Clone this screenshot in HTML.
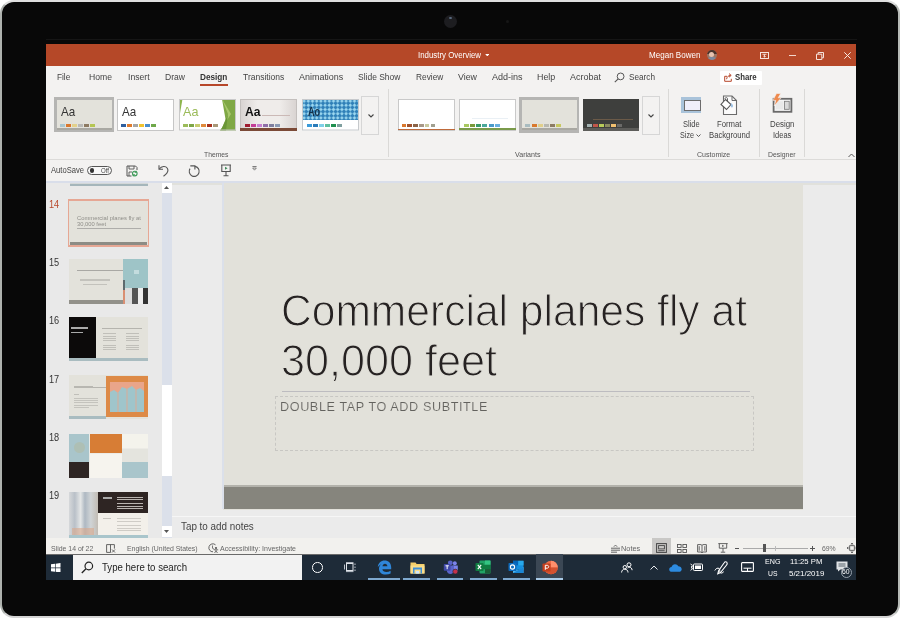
<!DOCTYPE html>
<html><head><meta charset="utf-8"><title>PowerPoint on tablet</title>
<style>
html,body{margin:0;padding:0;background:#fff;}
body{width:900px;height:618px;position:relative;overflow:hidden;font-family:"Liberation Sans",sans-serif;}
.t,#device div,#device svg{position:absolute;}
.t{white-space:nowrap;transform-origin:0 50%;display:block;}
#device{position:absolute;left:0;top:0;width:900px;height:618px;box-sizing:border-box;background:#080808;border:2px solid;border-color:#dedede #b6bab6 #d4d4d4 #aeb2ae;border-radius:14px;}
#o{left:-2px;top:-2px;width:900px;height:618px;}
#screen{left:45.5px;top:44px;width:810.7px;height:536px;background:#e8e8e8;overflow:hidden;}
</style></head><body>
<div id="device"><div id="o">
  <div style="left:444px;top:15px;width:13px;height:13px;border-radius:50%;background:#1d1d20;"></div>
  <div style="left:449px;top:17px;width:3px;height:2px;border-radius:50%;background:#5d6f85;"></div>
  <div style="left:505.500px;top:19.500px;width:3.500px;height:3.500px;border-radius:50%;background:#171717;"></div>
  <div style="left:45.500px;top:38.500px;width:811px;height:1px;background:#151515;"></div>
  <div id="screen">
    <div id="g" style="left:-45.5px;top:-44px;width:900px;height:618px;">
<!-- title bar -->
<div style="left:45.5px;top:44px;width:810.7px;height:22px;background:#b54828;"></div>
<!-- title dropdown arrow -->
<svg style="left:484.500px;top:53.500px" width="4.600" height="2.800" viewBox="0 0 6 4"><path d="M0 0h6L3 3.5z" fill="#fff"/></svg>
<!-- avatar -->
<div style="left:706.5px;top:49.5px;width:10px;height:10px;border-radius:50%;background:#9a7565;overflow:hidden;">
  <div style="left:0;top:0;width:10px;height:4.500px;background:#4a332b;"></div>
  <div style="left:2.5px;top:2.5px;width:5px;height:5px;border-radius:50%;background:#e6c3b0;"></div>
  <div style="left:1px;top:7.5px;width:8px;height:4px;border-radius:3px 3px 0 0;background:#7b8aa0;"></div>
</div>
<!-- window controls -->
<svg style="left:759.700px;top:51.900px" width="9" height="7" viewBox="0 0 9 7"><rect x=".5" y=".5" width="8" height="6" fill="none" stroke="#f6e3dc" stroke-width="1"/><path d="M2.500 2.300h4M4.500 2.300v2.800M3.300 4l1.200 1.200L5.700 4" stroke="#f6e3dc" stroke-width=".9" fill="none"/></svg>
<div style="left:788.800px;top:55.200px;width:7px;height:1.100px;background:#f3d6cc;"></div>
<svg style="left:816px;top:51.800px" width="8" height="8" viewBox="0 0 8 8"><path d="M.5 2.200h5.300v5.300H.5z M2.200 2V.5h5.300v5.300H6" fill="none" stroke="#f6e3dc" stroke-width="1"/></svg>
<svg style="left:844px;top:51.900px" width="7" height="7" viewBox="0 0 7 7"><path d="M.3.300l6.400 6.400M6.700.3L.3 6.700" stroke="#f8e8e2" stroke-width="1"/></svg>

<!-- tab row + ribbon -->
<div style="left:45.5px;top:66px;width:810.7px;height:93px;background:#f3f2f1;"></div>
<div style="left:200px;top:83.5px;width:28px;height:2px;background:#b7472a;"></div>
<!-- search icon -->
<svg style="left:614px;top:71.5px" width="11" height="11" viewBox="0 0 11 11"><circle cx="6.6" cy="4.4" r="3.4" fill="none" stroke="#555" stroke-width="1"/><path d="M4.2 6.8L.8 10.2" stroke="#555" stroke-width="1.1"/></svg>
<!-- share -->
<div style="left:720px;top:70.5px;width:42px;height:14px;background:#fff;border-radius:1px;"></div>
<svg style="left:723.5px;top:72.5px" width="9" height="9" viewBox="0 0 9 9"><path d="M3 3.3H.7v5h6.6V5.8" fill="none" stroke="#b7472a" stroke-width="1"/><path d="M2.6 6.2c.2-2.2 1.600-3.600 4-3.800M5 .6l2.200 1.800L5 4.200" fill="none" stroke="#b7472a" stroke-width="1"/></svg>
<div style="left:54px;top:97px;width:60px;height:35px;background:#b5b5b3;"></div>
<div style="left:56.5px;top:99.5px;width:55px;height:30px;background:#e3e2db;"></div>
<div style="left:56.5px;top:128px;width:55px;height:1.5px;background:#a9a8a2;"></div>
<div style="left:60px;top:123.8px;width:5px;height:3px;background:#a9c6cf;"></div>
<div style="left:66px;top:123.8px;width:5px;height:3px;background:#d9782d;"></div>
<div style="left:72px;top:123.8px;width:5px;height:3px;background:#e2d18c;"></div>
<div style="left:78px;top:123.8px;width:5px;height:3px;background:#b9b9b7;"></div>
<div style="left:84px;top:123.8px;width:5px;height:3px;background:#8d7a62;"></div>
<div style="left:90px;top:123.8px;width:5px;height:3px;background:#b5c653;"></div>
<div style="left:117px;top:99px;width:57px;height:31.5px;background:#fff;box-sizing:border-box;border:1px solid #c6c6c6;"></div>
<div style="left:121px;top:123.8px;width:5px;height:3px;background:#2f5f9e;"></div>
<div style="left:127px;top:123.8px;width:5px;height:3px;background:#e07b2c;"></div>
<div style="left:133px;top:123.8px;width:5px;height:3px;background:#a5a5a5;"></div>
<div style="left:139px;top:123.8px;width:5px;height:3px;background:#f0c330;"></div>
<div style="left:145px;top:123.8px;width:5px;height:3px;background:#4a8fcf;"></div>
<div style="left:151px;top:123.8px;width:5px;height:3px;background:#6fa84a;"></div>
<svg style="left:178.500px;top:99px" width="57" height="31.500" viewBox="0 0 57 31.500"><rect width="57" height="31.500" fill="#fff"/><path d="M43 0h14v31.500H41l6-8.500z" fill="#7fa845"/><path d="M43 0l6 15-6 14 9-14z" fill="#a8c76c"/><path d="M49 15l-6 14 -2 2.500 h6z" fill="#6b9638"/><path d="M0 0h3.500L0 20z" fill="#8db54d"/><rect x=".5" y=".5" width="56" height="30.500" fill="none" stroke="#c9c9c9"/></svg>
<div style="left:183px;top:123.8px;width:5px;height:3px;background:#9bbb59;"></div>
<div style="left:189px;top:123.8px;width:5px;height:3px;background:#7ea647;"></div>
<div style="left:195px;top:123.8px;width:5px;height:3px;background:#c7cc6f;"></div>
<div style="left:201px;top:123.8px;width:5px;height:3px;background:#e08a3c;"></div>
<div style="left:207px;top:123.8px;width:5px;height:3px;background:#a8321d;"></div>
<div style="left:213px;top:123.8px;width:5px;height:3px;background:#a89878;"></div>
<div style="left:240.3px;top:99px;width:56.5px;height:31.5px;background:linear-gradient(90deg,#d9d4d2,#efecea 30%,#efecea 70%,#d9d4d2);box-sizing:border-box;border:1px solid #c3bfbd;"></div>
<div style="left:240.3px;top:128px;width:56.5px;height:2.5px;background:#7b4a37;"></div>
<div style="left:262px;top:114.8px;width:28px;height:0.8px;background:#cbb9b6;"></div>
<div style="left:244.5px;top:123.6px;width:5px;height:3px;background:#a01c30;"></div>
<div style="left:250.5px;top:123.6px;width:5px;height:3px;background:#c43e96;"></div>
<div style="left:256.5px;top:123.6px;width:5px;height:3px;background:#c77fd0;"></div>
<div style="left:262.5px;top:123.6px;width:5px;height:3px;background:#8f6fa8;"></div>
<div style="left:268.5px;top:123.6px;width:5px;height:3px;background:#7f7f9f;"></div>
<div style="left:274.5px;top:123.6px;width:5px;height:3px;background:#8c9bb5;"></div>
<svg style="left:302px;top:99px" width="57" height="31.500" viewBox="0 0 57 31.500"><defs><pattern id="pt" width="4.200" height="4.200" patternUnits="userSpaceOnUse"><rect width="4.200" height="4.200" fill="#2f80b8"/><path d="M2.100 .2L4 2.100 2.100 4 .2 2.100z" fill="#9bd7ef"/></pattern></defs><rect width="57" height="31.500" fill="#fff"/><rect width="57" height="21" fill="url(#pt)"/><rect x=".5" y=".5" width="56" height="30.500" fill="none" stroke="#c6c9cc"/></svg>
<div style="left:306.5px;top:124px;width:5px;height:3px;background:#3a9ad9;"></div>
<div style="left:312.5px;top:124px;width:5px;height:3px;background:#2b7bb9;"></div>
<div style="left:318.5px;top:124px;width:5px;height:3px;background:#7fd0e8;"></div>
<div style="left:324.5px;top:124px;width:5px;height:3px;background:#5fbf9f;"></div>
<div style="left:330.5px;top:124px;width:5px;height:3px;background:#1f8f4f;"></div>
<div style="left:336.5px;top:124px;width:5px;height:3px;background:#7f9f9f;"></div>
<div style="left:361.3px;top:95.5px;width:18.2px;height:39px;background:#f3f2f1;box-sizing:border-box;border:1px solid #d6d6d6;"></div>
<svg style="left:367.500px;top:113.500px" width="6" height="4" viewBox="0 0 6 4"><path d="M.5.5L3 3 5.500.5" fill="none" stroke="#444" stroke-width="1.100"/></svg>
<div style="left:387.5px;top:89px;width:1px;height:68px;background:#dad9d7;"></div>
<div style="left:668.3px;top:89px;width:1px;height:68px;background:#dad9d7;"></div>
<div style="left:759px;top:89px;width:1px;height:68px;background:#dad9d7;"></div>
<div style="left:803.5px;top:89px;width:1px;height:68px;background:#dad9d7;"></div>
<div style="left:397.5px;top:99px;width:57px;height:31.5px;background:#fff;box-sizing:border-box;border:1px solid #c9c9c9;"></div>
<div style="left:397.5px;top:128.6px;width:57px;height:1.9px;background:#bf6a3a;"></div>
<div style="left:401.5px;top:124px;width:4.8px;height:3px;background:#d9782d;"></div>
<div style="left:407.3px;top:124px;width:4.8px;height:3px;background:#a0522d;"></div>
<div style="left:413.1px;top:124px;width:4.8px;height:3px;background:#8b6347;"></div>
<div style="left:418.9px;top:124px;width:4.8px;height:3px;background:#a89888;"></div>
<div style="left:424.7px;top:124px;width:4.8px;height:3px;background:#c9c9a0;"></div>
<div style="left:430.5px;top:124px;width:4.8px;height:3px;background:#a0a090;"></div>
<div style="left:459.2px;top:99px;width:56.6px;height:31.5px;background:#fff;box-sizing:border-box;border:1px solid #c9c9c9;"></div>
<div style="left:459.2px;top:128.4px;width:56.6px;height:2.1px;background:#7a9a4a;"></div>
<div style="left:463.7px;top:123.8px;width:5.2px;height:3px;background:#a8c860;"></div>
<div style="left:469.9px;top:123.8px;width:5.2px;height:3px;background:#7a9a3a;"></div>
<div style="left:476.1px;top:123.8px;width:5.2px;height:3px;background:#3a9a6a;"></div>
<div style="left:482.3px;top:123.8px;width:5.2px;height:3px;background:#4aa89a;"></div>
<div style="left:488.5px;top:123.8px;width:5.2px;height:3px;background:#4a9ac8;"></div>
<div style="left:494.7px;top:123.8px;width:5.2px;height:3px;background:#6ab0e0;"></div>
<div style="left:472px;top:118.3px;width:36px;height:0.6px;background:#eaf0f5;"></div>
<div style="left:519.2px;top:97px;width:60.3px;height:35.5px;background:#b5b5b3;"></div>
<div style="left:521.7px;top:99.5px;width:55.3px;height:30.3px;background:#e3e2db;"></div>
<div style="left:521.7px;top:128.3px;width:55.3px;height:1.5px;background:#a9a8a2;"></div>
<div style="left:525.3px;top:123.8px;width:5.2px;height:3px;background:#a9bcc0;"></div>
<div style="left:531.5px;top:123.8px;width:5.2px;height:3px;background:#d9782d;"></div>
<div style="left:537.7px;top:123.8px;width:5.2px;height:3px;background:#e0cf8b;"></div>
<div style="left:543.9px;top:123.8px;width:5.2px;height:3px;background:#b8b8b0;"></div>
<div style="left:550.1px;top:123.8px;width:5.2px;height:3px;background:#8c7b63;"></div>
<div style="left:556.3px;top:123.8px;width:5.2px;height:3px;background:#c8c860;"></div>
<div style="left:583px;top:99px;width:56px;height:31.5px;background:#3e3f3d;"></div>
<div style="left:583px;top:128px;width:56px;height:2.5px;background:#5d5d5a;"></div>
<div style="left:593px;top:118.5px;width:40px;height:0.7px;background:#6b5a48;"></div>
<div style="left:586.7px;top:123.6px;width:5px;height:3px;background:#a3b1b0;"></div>
<div style="left:592.7px;top:123.6px;width:5px;height:3px;background:#c0564a;"></div>
<div style="left:598.7px;top:123.6px;width:5px;height:3px;background:#b8cc5a;"></div>
<div style="left:604.7px;top:123.6px;width:5px;height:3px;background:#8a8a60;"></div>
<div style="left:610.7px;top:123.6px;width:5px;height:3px;background:#f0c070;"></div>
<div style="left:616.7px;top:123.6px;width:5px;height:3px;background:#6a6a68;"></div>
<div style="left:642.2px;top:95.5px;width:18.3px;height:39px;background:#f3f2f1;box-sizing:border-box;border:1px solid #d6d6d6;"></div>
<svg style="left:648.300px;top:113.500px" width="6" height="4" viewBox="0 0 6 4"><path d="M.5.5L3 3 5.500.5" fill="none" stroke="#444" stroke-width="1.100"/></svg>
<div style="left:681px;top:97.2px;width:20px;height:15.8px;background:#a9c3da;"></div>
<div style="left:684.2px;top:99.7px;width:16.6px;height:11.6px;background:#f0effa;box-sizing:border-box;border:1.300px solid #6c6c6c;"></div>
<svg style="left:696px;top:134.300px" width="5" height="3.500" viewBox="0 0 5 3.500"><path d="M.5.5L2.500 2.500 4.500.5" fill="none" stroke="#555" stroke-width="1"/></svg>
<svg style="left:720px;top:94.500px" width="19" height="21" viewBox="0 0 19 21"><path d="M3.500 1h8.500l4.500 4.500v14H3.500z" fill="#fbfbfb" stroke="#6b6b6b" stroke-width="1.100"/><path d="M12 1v4.500h4.500" fill="none" stroke="#6b6b6b" stroke-width="1"/><path d="M5.500 4.500l5.500 5-4.500 5-5.500-5z" fill="#fff" stroke="#555" stroke-width="1.100"/><path d="M5 4c0-2 2.500-2 2.500 0v2.500" fill="none" stroke="#555" stroke-width=".9"/><path d="M11 8c1.800 1.500 2.800 3 1.500 4.300-1.300.8-2.300-.8-1.500-4.300z" fill="#9ec3e6"/></svg>
<svg style="left:771px;top:93px" width="22" height="21" viewBox="0 0 22 21"><rect x="2.600" y="5.800" width="17.800" height="13" fill="#f4f4f4" stroke="#6a6a6a" stroke-width="1.800"/><rect x="13.500" y="8.300" width="4.700" height="8" fill="#d9d9d9" stroke="#7a7a7a" stroke-width=".8"/><rect x="4.800" y="8.300" width="7.500" height="8" fill="#e9e9e9"/><path d="M5.500.5h4.200L7.200 4.800h3L3.200 13l1.600-5.600H1.800z" fill="#ee8a4e" stroke="#f3f2f1" stroke-width=".6"/></svg>
<svg style="left:848px;top:153px" width="7" height="5" viewBox="0 0 7 5"><path d="M.5 4L3.500 1 6.500 4" fill="none" stroke="#555" stroke-width="1"/></svg>
<div style="left:45.5px;top:159px;width:810.7px;height:1px;background:#dcdbd9;"></div>
<!-- QAT -->
<div style="left:45.5px;top:160px;width:810.7px;height:21px;background:#f3f2f1;"></div>

<!-- autosave toggle -->
<div style="left:86.500px;top:165.500px;width:25.500px;height:9.500px;border:1px solid #555;border-radius:6px;box-sizing:border-box;background:#f8f8f8;"></div>
<div style="left:89.800px;top:168px;width:4.500px;height:4.500px;border-radius:50%;background:#333;"></div>
<!-- save icon -->
<svg style="left:126px;top:164.500px" width="12" height="12" viewBox="0 0 12 12"><path d="M1 1h8.500L11 2.500V5M5.500 11H1V1" fill="none" stroke="#555" stroke-width="1"/><path d="M3 1v3h5V1M3 11V7h3" fill="none" stroke="#555" stroke-width=".9"/><circle cx="8.800" cy="8.600" r="2.300" fill="none" stroke="#3f9b5a" stroke-width="1.100"/><path d="M10.300 5.800v1.700H8.600M7.300 11.300V9.600H9" fill="none" stroke="#3f9b5a" stroke-width=".8"/></svg>
<!-- undo -->
<svg style="left:157.500px;top:164px" width="12" height="13" viewBox="0 0 12 13"><path d="M1 1.200v4h4" fill="none" stroke="#555" stroke-width="1.100"/><path d="M1.300 5c2.300-3 6.200-3.300 8-.8 1.500 2.500.2 5.200-3.800 8" fill="none" stroke="#555" stroke-width="1.100"/></svg>
<!-- redo -->
<svg style="left:186.700px;top:163.300px" width="14" height="15" viewBox="0 0 14 15"><path d="M3.300 2.900H7.900V6.400" fill="none" stroke="#555" stroke-width="1.100"/><path d="M7.900 3.400A5 5 0 1 1 3 5.600" fill="none" stroke="#555" stroke-width="1.100"/></svg>
<!-- present -->
<svg style="left:219.500px;top:164px" width="12" height="13" viewBox="0 0 12 13"><path d="M1 1h10M1.800 1v6.500h8.400V1M6 7.500v4M3.500 11.800h5" fill="none" stroke="#555" stroke-width="1.100"/><path d="M5 2.800v3l2.600-1.500z" fill="#3f8a5a"/></svg>
<!-- more -->
<svg style="left:251.700px;top:166px" width="5" height="5" viewBox="0 0 6 6"><path d="M.5.600h5" stroke="#555" stroke-width=".9"/><path d="M.8 2.400h4.400L3 5z" fill="none" stroke="#555" stroke-width=".8"/></svg>

<!-- main area -->
<div style="left:45.5px;top:182px;width:810.7px;height:356px;background:#e9e9e9;"></div>
<div style="left:172px;top:182px;width:684px;height:356px;background:#ebebeb;"></div>
<div style="left:161.500px;top:182px;width:10.500px;height:355.500px;background:#dbe0ea;"></div>
<div style="left:161.500px;top:385px;width:10.500px;height:91px;background:#fff;"></div>
<div style="left:161.500px;top:182px;width:10.500px;height:10.500px;background:#fff;"></div>
<div style="left:161.500px;top:526px;width:10.500px;height:10.500px;background:#fff;"></div>
<svg style="left:164.300px;top:186px" width="5" height="3" viewBox="0 0 7 4"><path d="M0 4L3.500 0 7 4z" fill="#555"/></svg>
<svg style="left:164.300px;top:530px" width="5" height="3" viewBox="0 0 7 4"><path d="M0 0L3.500 4 7 0z" fill="#555"/></svg>
<div style="left:69.5px;top:182px;width:78.5px;height:3.5px;background:#d4d8d8;"></div>
<div style="left:69.5px;top:184.3px;width:78.5px;height:1.7px;background:#a5b6bb;"></div>
<div style="left:67.6px;top:199px;width:81.6px;height:48px;background:#e6a794;"></div>
<div style="left:69.2px;top:200.6px;width:78.4px;height:44.8px;background:#e3e2db;"></div>
<div style="left:69.5px;top:242px;width:77.8px;height:3.3px;background:#8d8c85;"></div>
<div style="left:77px;top:228.3px;width:64px;height:0.8px;background:#aeadaa;"></div>
<div style="left:69.3px;top:259px;width:78.2px;height:44.6px;background:#e3e2db;"></div>
<div style="left:69.3px;top:299.6px;width:53.7px;height:4px;background:#92918a;"></div>
<div style="left:123px;top:259px;width:24.5px;height:28.5px;background:#9ec4c7;"></div>
<div style="left:123px;top:287.5px;width:24.5px;height:16.1px;background:linear-gradient(90deg,#d98f73 0 6%,#ddd 6% 35%,#555 35% 60%,#eee 60% 80%,#333 80%);"></div>
<div style="left:123px;top:280px;width:2px;height:10px;background:#5d6a6e;"></div>
<div style="left:77px;top:270px;width:46px;height:0.8px;background:#a9a8a4;"></div>
<div style="left:80px;top:279.2px;width:30px;height:1.6px;background:#c3c2bc;"></div>
<div style="left:83px;top:283.6px;width:24px;height:1.6px;background:#c3c2bc;"></div>
<div style="left:134px;top:270px;width:5px;height:4px;background:#c3dcde;"></div>
<div style="left:69.3px;top:317px;width:78.7px;height:43.8px;background:#e3e2db;"></div>
<div style="left:69.3px;top:317px;width:27px;height:41px;background:#0c0a0a;"></div>
<div style="left:69.3px;top:358px;width:78.7px;height:2.8px;background:#a9bcc0;"></div>
<div style="left:71px;top:327px;width:17px;height:1.8px;background:#aaa;"></div>
<div style="left:71px;top:331.5px;width:12px;height:1.8px;background:#aaa;"></div>
<div style="left:102px;top:328.3px;width:40px;height:0.7px;background:#b5b4ae;"></div>
<div style="left:103px;top:332.5px;width:13px;height:1px;background:#c0bfb9;"></div>
<div style="left:126px;top:332.5px;width:13px;height:1px;background:#c0bfb9;"></div>
<div style="left:103px;top:336px;width:13px;height:1px;background:#c0bfb9;"></div>
<div style="left:126px;top:336px;width:13px;height:1px;background:#c0bfb9;"></div>
<div style="left:103px;top:338px;width:13px;height:1px;background:#c0bfb9;"></div>
<div style="left:126px;top:338px;width:13px;height:1px;background:#c0bfb9;"></div>
<div style="left:103px;top:340px;width:13px;height:1px;background:#c0bfb9;"></div>
<div style="left:126px;top:340px;width:13px;height:1px;background:#c0bfb9;"></div>
<div style="left:103px;top:344.5px;width:13px;height:1px;background:#c0bfb9;"></div>
<div style="left:126px;top:344.5px;width:13px;height:1px;background:#c0bfb9;"></div>
<div style="left:103px;top:346.5px;width:13px;height:1px;background:#c0bfb9;"></div>
<div style="left:126px;top:346.5px;width:13px;height:1px;background:#c0bfb9;"></div>
<div style="left:103px;top:348.5px;width:13px;height:1px;background:#c0bfb9;"></div>
<div style="left:126px;top:348.5px;width:13px;height:1px;background:#c0bfb9;"></div>
<div style="left:69.3px;top:375px;width:78.7px;height:43.8px;background:#e3e2db;"></div>
<div style="left:69.3px;top:416px;width:37px;height:2.8px;background:#a9bcc0;"></div>
<div style="left:106px;top:375.5px;width:42px;height:41.8px;background:#dd8a47;"></div>
<div style="left:110px;top:382px;width:34px;height:30px;background:#e9a58a;"></div>
<svg style="left:110px;top:384px" width="34" height="28" viewBox="0 0 34 28"><path d="M0 28V8l4-2 4 3 4-6 5 2 5-3 4 4 4-2 4 3v21z" fill="#9fc5cb"/><path d="M8 28V9M17 28V5M26 28V6" stroke="#e9a58a" stroke-width=".8"/></svg>
<div style="left:74px;top:387px;width:32px;height:0.7px;background:#b5b4ae;"></div>
<div style="left:74px;top:385.5px;width:19px;height:2px;background:#b8b7b1;"></div>
<div style="left:74px;top:393.5px;width:5px;height:1px;background:#c0bfb9;"></div>
<div style="left:74px;top:398px;width:24px;height:1.1px;background:#c4c3bd;"></div>
<div style="left:74px;top:400.2px;width:24px;height:1.1px;background:#c4c3bd;"></div>
<div style="left:74px;top:402.4px;width:24px;height:1.1px;background:#c4c3bd;"></div>
<div style="left:74px;top:404.6px;width:24px;height:1.1px;background:#c4c3bd;"></div>
<div style="left:74px;top:406.8px;width:15px;height:1.1px;background:#c4c3bd;"></div>
<div style="left:69.3px;top:433.8px;width:78.7px;height:44.2px;background:#ecebe6;"></div>
<div style="left:69.3px;top:433.8px;width:20px;height:28px;background:#a9c5cb;"></div>
<div style="left:73.5px;top:442px;width:11px;height:11px;background:#aebfb4;border-radius:50%;"></div>
<div style="left:90px;top:433.8px;width:31.5px;height:19px;background:#d77d35;"></div>
<div style="left:122px;top:433.8px;width:26px;height:14px;background:#f4f3ec;"></div>
<div style="left:122px;top:448.5px;width:26px;height:13px;background:#e4e4de;"></div>
<div style="left:69.3px;top:462px;width:20px;height:16px;background:#2e2523;"></div>
<div style="left:90px;top:453.5px;width:31.5px;height:24.5px;background:#f6f4ee;"></div>
<div style="left:122px;top:462px;width:26px;height:16px;background:#a9c5cb;"></div>
<div style="left:69.3px;top:492px;width:78.7px;height:46px;background:#f3f0ea;"></div>
<div style="left:69.3px;top:492px;width:29px;height:46px;background:linear-gradient(90deg,#d6d8da,#b9c0c8 20%,#e4e6e6 40%,#aeb8c2 55%,#d0d4d6 75%,#c2bcb4);"></div>
<div style="left:72px;top:528px;width:22px;height:8px;background:#d9a98c;opacity:.6;"></div>
<div style="left:98.3px;top:492px;width:49.7px;height:21px;background:#2e2523;"></div>
<div style="left:103px;top:497px;width:9px;height:1.5px;background:#aaa;"></div>
<div style="left:117px;top:496.5px;width:26px;height:1.3px;background:#b9b4b0;"></div>
<div style="left:117px;top:499px;width:26px;height:1.3px;background:#b9b4b0;"></div>
<div style="left:117px;top:503px;width:26px;height:1.3px;background:#b9b4b0;"></div>
<div style="left:117px;top:505.5px;width:26px;height:1.3px;background:#b9b4b0;"></div>
<div style="left:117px;top:508px;width:26px;height:1.3px;background:#b9b4b0;"></div>
<div style="left:103px;top:518px;width:8px;height:1.3px;background:#c8c5bf;"></div>
<div style="left:117px;top:518px;width:24px;height:1.2px;background:#cfccc6;"></div>
<div style="left:117px;top:520.5px;width:24px;height:1.2px;background:#cfccc6;"></div>
<div style="left:117px;top:525px;width:24px;height:1.2px;background:#cfccc6;"></div>
<div style="left:117px;top:527.5px;width:24px;height:1.2px;background:#cfccc6;"></div>
<div style="left:117px;top:530px;width:24px;height:1.2px;background:#cfccc6;"></div>
<div style="left:69.3px;top:534.5px;width:78.7px;height:3px;background:#a9c5cb;"></div>
<!-- slide -->
<div style="left:172px;top:182.500px;width:684.200px;height:2.500px;background:#e1e1dc;"></div>
<div style="left:222.500px;top:182px;width:580.500px;height:327.500px;background:#e2e1da;"></div>
<div style="left:222.500px;top:485px;width:580.500px;height:2.500px;background:#b3b2ab;"></div>
<div style="left:222.500px;top:487.300px;width:580.500px;height:21.700px;background:#86857d;"></div>
<div style="left:281.500px;top:390.500px;width:468px;height:1.200px;background:#bdbcc0;"></div>
<div style="left:275px;top:396.300px;width:479px;height:54.600px;border:1px dashed #c8c7c3;box-sizing:border-box;"></div>
<div style="left:222.300px;top:183px;width:1.500px;height:326px;background:#dbe0ea;"></div>
<div style="left:45.500px;top:180.700px;width:810.700px;height:2.200px;background:#d9deea;"></div>
<!-- notes -->
<div style="left:172px;top:515.500px;width:684px;height:1.500px;background:#f6f6f6;"></div>
<!-- status bar -->
<div style="left:45.5px;top:537.500px;width:810.7px;height:16.500px;background:#f2f1ee;"></div>
<!-- status icons -->
<svg style="left:106px;top:543.500px" width="10" height="9" viewBox="0 0 10 9"><path d="M.6.600h7.800v4M.6.600v7.800h4M4.500.6v7.800" fill="none" stroke="#555" stroke-width=".9"/><path d="M6 5.500l3 3M9 5.500l-3 3" stroke="#555" stroke-width=".9"/></svg>
<svg style="left:207.500px;top:543px" width="11" height="10" viewBox="0 0 11 10"><path d="M7.500 1.800A4 4 0 1 0 5 8.800" fill="none" stroke="#555" stroke-width=".9"/><path d="M4.500 2.500v2.800l1.800 1" fill="none" stroke="#555" stroke-width=".8"/><circle cx="8" cy="5" r="1.100" fill="#555"/><path d="M5.800 6.800h4.400M8 6.800v1.200l-1.500 2M8 8l1.500 2" stroke="#555" stroke-width=".8" fill="none"/></svg>
<svg style="left:610.500px;top:543.500px" width="9" height="9" viewBox="0 0 9 9"><path d="M0 4.200h9M0 6.200h9M0 8.200h6" stroke="#555" stroke-width=".9"/><path d="M2.800 2.800L4.500 1l1.700 1.800" fill="none" stroke="#555" stroke-width=".8"/></svg>
<div style="left:651.700px;top:538px;width:19.300px;height:16px;background:#c9c8c6;"></div>
<svg style="left:656px;top:543px" width="11" height="10" viewBox="0 0 11 10"><rect x=".6" y=".6" width="9.800" height="8.800" fill="none" stroke="#444" stroke-width="1"/><rect x="2.600" y="2.600" width="5.800" height="3.300" fill="none" stroke="#444" stroke-width=".9"/><path d="M2.300 7.700h6.400" stroke="#444" stroke-width=".9"/></svg>
<svg style="left:677px;top:543.500px" width="10" height="9" viewBox="0 0 10 9"><rect x=".5" y=".5" width="3.600" height="3" fill="none" stroke="#555" stroke-width=".9"/><rect x="5.900" y=".5" width="3.600" height="3" fill="none" stroke="#555" stroke-width=".9"/><rect x=".5" y="5.500" width="3.600" height="3" fill="none" stroke="#555" stroke-width=".9"/><rect x="5.900" y="5.500" width="3.600" height="3" fill="none" stroke="#555" stroke-width=".9"/></svg>
<svg style="left:697px;top:543.500px" width="10" height="9" viewBox="0 0 10 9"><path d="M.6.600h3.400l1 .8 1-.8h3.400v7.400H6l-1 .8-1-.8H.6zM5 1.400v7.400M2.200 2.200v4.500M7.800 2.200v4.500" fill="none" stroke="#555" stroke-width=".9"/></svg>
<svg style="left:717.500px;top:543px" width="10" height="10" viewBox="0 0 10 10"><path d="M.3.600h9.400M1.300.6v4.600h7.400V.6M5 5.200v3.600M2.800 9.200h4.400" fill="none" stroke="#555" stroke-width=".9"/><path d="M4.200 1.700v2.400l2-1.200z" fill="#555"/></svg>
<!-- zoom -->
<div style="left:735.300px;top:547.800px;width:4px;height:.900px;background:#555;"></div>
<div style="left:742.700px;top:547.900px;width:65.600px;height:.800px;background:#aaa;"></div>
<div style="left:775px;top:546px;width:.800px;height:4.500px;background:#bbb;"></div>
<div style="left:763px;top:543.700px;width:2.600px;height:8.600px;background:#555;"></div>
<div style="left:810px;top:547.800px;width:5px;height:.900px;background:#555;"></div>
<div style="left:812.050px;top:545.700px;width:.900px;height:5px;background:#555;"></div>
<svg style="left:846.500px;top:543px" width="10" height="10" viewBox="0 0 10 10"><rect x="2.700" y="2.700" width="4.600" height="4.600" fill="none" stroke="#555" stroke-width=".9"/><path d="M5 0v2.500M5 7.500V10M0 5h2.500M7.500 5H10M3.800 1.200L5 0l1.200 1.200M3.800 8.800L5 10l1.200-1.200M1.200 3.800L0 5l1.200 1.200M8.800 3.800L10 5 8.800 6.200" fill="none" stroke="#555" stroke-width=".8"/></svg>

<!-- taskbar -->
<div style="left:45.5px;top:554px;width:810.7px;height:26px;background:#1e2b38;"></div>
<div style="left:45.5px;top:553.500px;width:810.7px;height:1px;background:#6a6a6a;"></div>
<div style="left:72.500px;top:554.500px;width:229.500px;height:25.500px;background:#f2f2f2;"></div>
<!-- start -->
<svg style="left:51.300px;top:562.500px" width="9.500" height="9.500" viewBox="0 0 10 10"><path d="M0 1.400L4.200.8v3.900H0zM4.900.7L10 0v4.700H4.900zM0 5.400h4.200v3.900L0 8.700zM4.900 5.400H10V10l-5.100-.7z" fill="#fff"/></svg>
<!-- search icon -->
<svg style="left:80.500px;top:561px" width="13" height="13" viewBox="0 0 13 13"><circle cx="7.800" cy="5" r="3.800" fill="none" stroke="#222" stroke-width="1.200"/><path d="M5 7.800L.8 12" stroke="#222" stroke-width="1.300"/></svg>
<!-- cortana -->
<div style="left:312px;top:562.200px;width:10.600px;height:10.600px;border:1.700px solid #fff;border-radius:50%;box-sizing:border-box;"></div>
<!-- task view -->
<svg style="left:344px;top:562px" width="13" height="11" viewBox="0 0 13 11"><rect x="2.500" y="1.500" width="6.500" height="7" fill="none" stroke="#dfe3e8" stroke-width="1"/><path d="M.5 2.500v5M2 .4h7.500M2 9.600h7.500M11 1.500v1.500M11 4.500v1.500M11 7.500v1.500" stroke="#cfd5dc" stroke-width=".9" fill="none"/></svg>
<!-- edge -->
<svg style="left:377px;top:559.500px" width="15" height="15" viewBox="0 0 15 15"><path d="M.8 7.200C1.200 3 4 .6 7.600.6c3.800 0 6.600 2.600 6.600 7v1.600H5.400c.2 1.800 1.800 2.800 4 2.800 1.500 0 2.900-.4 4.200-1.200v2.800c-1.400.7-3 1-4.800 1C4.600 14.600 2 12.300 2 8.800c0-2 .9-3.500 2.400-4.500C3 5 1.600 5.800.8 7.200zM5.500 6.300h4.900C10.300 4.700 9.300 3.700 8 3.700c-1.300 0-2.300 1-2.500 2.600z" fill="#2f86d8"/></svg>
<!-- explorer -->
<svg style="left:409.500px;top:560.500px" width="15" height="13" viewBox="0 0 15 13"><path d="M.5 1.500h5l1.200 1.500h7.800v9.500H.5z" fill="#f5cf6a"/><path d="M.5 4.500h14v8H.5z" fill="#f9dd8a"/><rect x="3" y="6.500" width="9" height="6" fill="#3f8fd6"/><rect x="4.500" y="8.500" width="6" height="4" fill="#f9dd8a"/><rect x="6" y="10" width="3" height="2.500" fill="#cfe6fa"/></svg>
<!-- teams -->
<svg style="left:442.500px;top:559.500px" width="16" height="15" viewBox="0 0 16 15"><circle cx="11.800" cy="3.300" r="2" fill="#7b83eb"/><circle cx="7.300" cy="2.800" r="2.400" fill="#5b64c9"/><path d="M9.500 5.500h5.300v4.200c0 1.700-1.200 2.800-2.700 2.800-1.600 0-2.600-1.200-2.600-2.800z" fill="#7b83eb"/><path d="M3.800 5.500H11v5c0 2-1.600 3.400-3.600 3.400s-3.600-1.500-3.600-3.400z" fill="#5b64c9"/><rect x=".8" y="4" width="6.700" height="6.700" rx=".8" fill="#4049a8"/><path d="M2.500 5.800h3.300M4.150 5.800v3.400" stroke="#fff" stroke-width="1"/><circle cx="12.300" cy="11.600" r="2.500" fill="#c4314b" stroke="#1e2b38" stroke-width=".6"/></svg>
<!-- excel -->
<svg style="left:475px;top:560px" width="16" height="14" viewBox="0 0 16 14"><rect x="4.500" y=".5" width="11" height="13" rx="1" fill="#21a366"/><rect x="10" y=".5" width="5.500" height="4.300" fill="#33c481"/><rect x="10" y="4.800" width="5.500" height="4.300" fill="#107c41"/><rect x="10" y="9.100" width="5.500" height="4.400" fill="#185c37"/><rect x="4.500" y="4.800" width="5.500" height="4.300" fill="#107c41"/><rect x=".5" y="3" width="8" height="8" rx=".8" fill="#107c41"/><path d="M2.800 4.800l3.400 4.400M6.200 4.800L2.800 9.200" stroke="#fff" stroke-width="1.100"/></svg>
<!-- outlook -->
<svg style="left:508px;top:560px" width="16" height="14" viewBox="0 0 16 14"><rect x="5" y=".8" width="10.500" height="9" fill="#1490df"/><rect x="5" y=".8" width="5.300" height="4.500" fill="#0364b8"/><rect x="10.300" y=".8" width="5.200" height="4.500" fill="#28a8ea"/><path d="M5 7l5.300 3.500L15.500 7v6H5z" fill="#50b8f0"/><path d="M5 13l10.500-6v6z" fill="#1a86d4"/><rect x=".5" y="3" width="8" height="8" rx=".8" fill="#0f6cbd"/><circle cx="4.500" cy="7" r="2.100" fill="none" stroke="#fff" stroke-width="1.100"/></svg>
<!-- powerpoint active -->
<div style="left:535.700px;top:554px;width:27.600px;height:26px;background:#3b4754;"></div>
<svg style="left:541.500px;top:559.500px" width="16" height="15" viewBox="0 0 16 15"><circle cx="9" cy="7.500" r="6.800" fill="#ed6c47"/><path d="M9 .7a6.800 6.800 0 0 1 6.800 6.800H9z" fill="#ff8f6b"/><path d="M2.200 7.500h13.600A6.800 6.800 0 0 1 2.200 7.500z" fill="#d35230"/><rect x=".5" y="3.500" width="8" height="8" rx=".8" fill="#c43e1c"/><path d="M3.300 9.800V5.300h1.800c1 0 1.600.6 1.600 1.400S6.100 8.200 5.100 8.200H3.300" fill="none" stroke="#fff" stroke-width="1"/></svg>
<!-- underlines -->
<div style="left:367.700px;top:578.300px;width:32.300px;height:1.700px;background:#7fa9cf;"></div>
<div style="left:403.300px;top:578.300px;width:26.700px;height:1.700px;background:#7fa9cf;"></div>
<div style="left:436.700px;top:578.300px;width:26.600px;height:1.700px;background:#7fa9cf;"></div>
<div style="left:470px;top:578.300px;width:26.700px;height:1.700px;background:#7fa9cf;"></div>
<div style="left:503.300px;top:578.300px;width:26.700px;height:1.700px;background:#7fa9cf;"></div>
<div style="left:535.700px;top:578.300px;width:27.600px;height:1.700px;background:#a9cbe8;"></div>
<!-- tray -->
<svg style="left:620.500px;top:561.500px" width="12" height="11" viewBox="0 0 12 11"><circle cx="8" cy="2.800" r="2" fill="none" stroke="#fff" stroke-width="1"/><circle cx="3.800" cy="5.200" r="1.700" fill="none" stroke="#fff" stroke-width="1"/><path d="M.6 10.500c0-2 1.300-3.300 3.200-3.300s3.200 1.300 3.200 3.300M6.500 6c.5-.6 1-.8 1.700-.8 1.700 0 2.900 1.200 2.900 3" fill="none" stroke="#fff" stroke-width="1"/></svg>
<svg style="left:649.500px;top:565px" width="8" height="5" viewBox="0 0 8 5"><path d="M.5 4.500L4 1l3.500 3.500" fill="none" stroke="#e8ebee" stroke-width="1"/></svg>
<svg style="left:668.500px;top:562.500px" width="13" height="9" viewBox="0 0 13 9"><path d="M3 8.800C1.300 8.800.2 7.800.2 6.400c0-1.300 1-2.300 2.300-2.400C3 2.300 4.400 1.200 6 1.200c1.500 0 2.700.8 3.300 2 1.800 0 3.400 1.200 3.400 3 0 1.500-1.100 2.600-2.700 2.600z" fill="#2d8be0"/></svg>
<svg style="left:690px;top:562px" width="14" height="10" viewBox="0 0 14 10"><rect x="3.500" y="2" width="9" height="6.500" rx=".8" fill="none" stroke="#fff" stroke-width="1"/><rect x="5" y="3.500" width="6" height="3.500" fill="#fff"/><path d="M3.500 4.200H1.500v2h2M.5 2l2 1.300M.5 8.300l2-1.400" stroke="#fff" stroke-width=".9" fill="none"/></svg>
<svg style="left:714px;top:560.500px" width="14" height="14" viewBox="0 0 14 14"><path d="M11.500.8c1 0 1.700.8 1.700 1.700 0 .6-.2 1-.6 1.500L6.500 11.500 3.800 12.800l.8-3L10.200 1.700c.3-.5.800-.9 1.300-.9z" fill="none" stroke="#fff" stroke-width="1.100"/><path d="M.8 9.500c1-2 3-3 4.300-2 1.300 1.200 0 3.300 1.200 4.300 1 .8 2.500 0 3.500-1.200" fill="none" stroke="#fff" stroke-width="1"/></svg>
<svg style="left:740.500px;top:562px" width="13" height="10" viewBox="0 0 13 10"><rect x=".6" y=".6" width="11.800" height="8.800" rx=".6" fill="none" stroke="#fff" stroke-width="1.100"/><path d="M2.500 6.200h8M6.500 6.200v3" stroke="#fff" stroke-width="1"/></svg>
<svg style="left:836px;top:560.500px" width="12" height="11" viewBox="0 0 12 11"><path d="M.5.500h11v8H4.500L2 10.500V8.500H.5z" fill="#dfe2e5"/><path d="M2.500 3h7M2.500 5h7" stroke="#1e2b38" stroke-width=".7"/></svg>
<div style="left:840.600px;top:566.900px;width:11px;height:11px;border-radius:50%;background:#1e2b38;border:1px solid #98a2ad;box-sizing:border-box;"></div>

</div>

  </div>
</div></div>
<div id="tx" style="position:absolute;left:0;top:0;width:900px;height:618px;will-change:transform;">
<span class="t" style="left:417.7px;top:49.8px;font-size:8.5px;line-height:10.2px;color:#fff;font-weight:400;transform:scaleX(0.9260);">Industry Overview</span>
<span class="t" style="left:649.0px;top:49.6px;font-size:8.5px;line-height:10.2px;color:#fff;font-weight:400;transform:scaleX(0.9477);">Megan Bowen</span>
<span class="t" style="left:56.7px;top:72.3px;font-size:9px;line-height:10.8px;color:#444;font-weight:400;transform:scaleX(0.9163);">File</span>
<span class="t" style="left:89.3px;top:72.3px;font-size:9px;line-height:10.8px;color:#444;font-weight:400;transform:scaleX(0.9577);">Home</span>
<span class="t" style="left:127.7px;top:72.3px;font-size:9px;line-height:10.8px;color:#444;font-weight:400;transform:scaleX(0.9593);">Insert</span>
<span class="t" style="left:165.3px;top:72.3px;font-size:9px;line-height:10.8px;color:#444;font-weight:400;transform:scaleX(0.9517);">Draw</span>
<span class="t" style="left:242.7px;top:72.3px;font-size:9px;line-height:10.8px;color:#444;font-weight:400;transform:scaleX(0.9454);">Transitions</span>
<span class="t" style="left:299.0px;top:72.3px;font-size:9px;line-height:10.8px;color:#444;font-weight:400;transform:scaleX(0.9948);">Animations</span>
<span class="t" style="left:358.3px;top:72.3px;font-size:9px;line-height:10.8px;color:#444;font-weight:400;transform:scaleX(0.9416);">Slide Show</span>
<span class="t" style="left:416.0px;top:72.3px;font-size:9px;line-height:10.8px;color:#444;font-weight:400;transform:scaleX(0.9249);">Review</span>
<span class="t" style="left:457.7px;top:72.3px;font-size:9px;line-height:10.8px;color:#444;font-weight:400;transform:scaleX(0.9814);">View</span>
<span class="t" style="left:491.7px;top:72.3px;font-size:9px;line-height:10.8px;color:#444;font-weight:400;transform:scaleX(1.0028);">Add-ins</span>
<span class="t" style="left:536.7px;top:72.3px;font-size:9px;line-height:10.8px;color:#444;font-weight:400;transform:scaleX(0.9884);">Help</span>
<span class="t" style="left:570.0px;top:72.3px;font-size:9px;line-height:10.8px;color:#444;font-weight:400;transform:scaleX(0.9990);">Acrobat</span>
<span class="t" style="left:629.0px;top:72.3px;font-size:9px;line-height:10.8px;color:#444;font-weight:400;transform:scaleX(0.9113);">Search</span>
<span class="t" style="left:200.3px;top:72.3px;font-size:9px;line-height:10.8px;color:#333;font-weight:700;transform:scaleX(0.9129);">Design</span>
<span class="t" style="left:735.0px;top:72.3px;font-size:9px;line-height:10.8px;color:#333;font-weight:700;transform:scaleX(0.8675);">Share</span>
<span class="t" style="left:204.3px;top:150.1px;font-size:7.5px;line-height:9.0px;color:#555;font-weight:400;transform:scaleX(0.9006);">Themes</span>
<span class="t" style="left:515.0px;top:150.1px;font-size:7.5px;line-height:9.0px;color:#555;font-weight:400;transform:scaleX(0.9455);">Variants</span>
<span class="t" style="left:696.7px;top:150.1px;font-size:7.5px;line-height:9.0px;color:#555;font-weight:400;transform:scaleX(0.9397);">Customize</span>
<span class="t" style="left:767.5px;top:150.1px;font-size:7.5px;line-height:9.0px;color:#555;font-weight:400;transform:scaleX(0.9162);">Designer</span>
<span class="t" style="left:682.5px;top:118.8px;font-size:8.5px;line-height:10.2px;color:#444;font-weight:400;transform:scaleX(0.8833);">Slide</span>
<span class="t" style="left:680.0px;top:130.2px;font-size:8.5px;line-height:10.2px;color:#444;font-weight:400;transform:scaleX(0.8461);">Size</span>
<span class="t" style="left:717.2px;top:118.8px;font-size:8.5px;line-height:10.2px;color:#444;font-weight:400;transform:scaleX(0.9100);">Format</span>
<span class="t" style="left:709.2px;top:130.2px;font-size:8.5px;line-height:10.2px;color:#444;font-weight:400;transform:scaleX(0.9058);">Background</span>
<span class="t" style="left:769.7px;top:118.8px;font-size:8.5px;line-height:10.2px;color:#444;font-weight:400;transform:scaleX(0.9256);">Design</span>
<span class="t" style="left:772.5px;top:130.2px;font-size:8.5px;line-height:10.2px;color:#444;font-weight:400;transform:scaleX(0.8799);">Ideas</span>
<span class="t" style="left:51.0px;top:165.3px;font-size:8.5px;line-height:10.2px;color:#444;font-weight:400;transform:scaleX(0.8949);">AutoSave</span>
<span class="t" style="left:100.5px;top:166.6px;font-size:6.5px;line-height:7.8px;color:#444;font-weight:400;transform:scaleX(0.9343);">Off</span>
<span class="t" style="left:48.6px;top:197.9px;font-size:10.5px;line-height:12.6px;color:#b7472a;font-weight:400;transform:scaleX(0.8727);">14</span>
<span class="t" style="left:48.6px;top:255.9px;font-size:10.5px;line-height:12.6px;color:#333;font-weight:400;transform:scaleX(0.8727);">15</span>
<span class="t" style="left:48.6px;top:314.4px;font-size:10.5px;line-height:12.6px;color:#333;font-weight:400;transform:scaleX(0.8727);">16</span>
<span class="t" style="left:48.6px;top:372.6px;font-size:10.5px;line-height:12.6px;color:#333;font-weight:400;transform:scaleX(0.8727);">17</span>
<span class="t" style="left:48.6px;top:430.9px;font-size:10.5px;line-height:12.6px;color:#333;font-weight:400;transform:scaleX(0.8727);">18</span>
<span class="t" style="left:48.6px;top:488.9px;font-size:10.5px;line-height:12.6px;color:#333;font-weight:400;transform:scaleX(0.8727);">19</span>
<span class="t" style="left:181.0px;top:520.7px;font-size:10px;line-height:12.0px;color:#444;font-weight:400;transform:scaleX(0.9844);">Tap to add notes</span>
<span class="t" style="left:51.0px;top:543.8px;font-size:7.5px;line-height:9.0px;color:#666;font-weight:400;transform:scaleX(0.9221);">Slide 14 of 22</span>
<span class="t" style="left:126.7px;top:543.8px;font-size:7.5px;line-height:9.0px;color:#666;font-weight:400;transform:scaleX(0.9204);">English (United States)</span>
<span class="t" style="left:220.0px;top:543.8px;font-size:7.5px;line-height:9.0px;color:#666;font-weight:400;transform:scaleX(0.9348);">Accessibility: Investigate</span>
<span class="t" style="left:620.7px;top:543.8px;font-size:7.5px;line-height:9.0px;color:#666;font-weight:400;transform:scaleX(0.9850);">Notes</span>
<span class="t" style="left:822.3px;top:543.8px;font-size:7.5px;line-height:9.0px;color:#666;font-weight:400;transform:scaleX(0.9124);">69%</span>
<span class="t" style="left:101.7px;top:561.6px;font-size:10px;line-height:12.0px;color:#222;font-weight:400;transform:scaleX(0.9616);">Type here to search</span>
<span class="t" style="left:764.5px;top:556.8px;font-size:8px;line-height:9.6px;color:#fff;font-weight:400;transform:scaleX(0.8937);">ENG</span>
<span class="t" style="left:767.5px;top:569.4px;font-size:8px;line-height:9.6px;color:#fff;font-weight:400;transform:scaleX(0.8539);">US</span>
<span class="t" style="left:790.0px;top:556.8px;font-size:8px;line-height:9.6px;color:#fff;font-weight:400;transform:scaleX(0.9597);">11:25 PM</span>
<span class="t" style="left:789.0px;top:569.4px;font-size:8px;line-height:9.6px;color:#fff;font-weight:400;transform:scaleX(0.9917);">5/21/2019</span>
<span class="t" style="left:842.4px;top:568.4px;font-size:7px;line-height:8.4px;color:#fff;font-weight:400;transform:scaleX(0.9747);">60</span>
<span class="t" style="left:281.2px;top:284.3px;font-size:44.4px;line-height:53.28px;color:#262222;font-weight:400;transform:scaleX(0.9588);-webkit-text-stroke:1.1px #e2e1da;">Commercial planes fly at</span>
<span class="t" style="left:281.2px;top:333.6px;font-size:44.4px;line-height:53.28px;color:#262222;font-weight:400;transform:scaleX(0.9723);-webkit-text-stroke:1.1px #e2e1da;">30,000 feet</span>
<span class="t" style="left:280.3px;top:398.7px;font-size:13px;line-height:15.6px;color:#63625e;font-weight:400;transform:scaleX(0.9729);letter-spacing:0.6px;-webkit-text-stroke:.15px #e2e1da;">DOUBLE TAP TO ADD SUBTITLE</span>
<span class="t" style="left:60.5px;top:104.2px;font-size:12.8px;line-height:15.36px;color:#333;font-weight:400;transform:scaleX(0.9070);">Aa</span>
<span class="t" style="left:122.2px;top:104.2px;font-size:12.8px;line-height:15.36px;color:#333;font-weight:400;transform:scaleX(0.9070);">Aa</span>
<span class="t" style="left:183.3px;top:104.1px;font-size:13px;line-height:15.6px;color:#9bbb59;font-weight:400;transform:scaleX(0.9682);">Aa</span>
<span class="t" style="left:245.3px;top:103.6px;font-size:13.5px;line-height:16.2px;color:#111;font-weight:700;transform:scaleX(0.8977);">Aa</span>
<span class="t" style="left:307.5px;top:104.7px;font-size:12px;line-height:14.4px;color:#12304a;font-weight:700;transform:scaleX(0.7625);">Ao</span>
<span class="t" style="left:77.0px;top:214.5px;font-size:5.8px;line-height:6.96px;color:#8f8e89;font-weight:400;transform:scaleX(1.0052);">Commercial planes fly at</span>
<span class="t" style="left:77.0px;top:221.2px;font-size:5.8px;line-height:6.96px;color:#8f8e89;font-weight:400;transform:scaleX(0.9995);">30,000 feet</span>
</div>
</body></html>
